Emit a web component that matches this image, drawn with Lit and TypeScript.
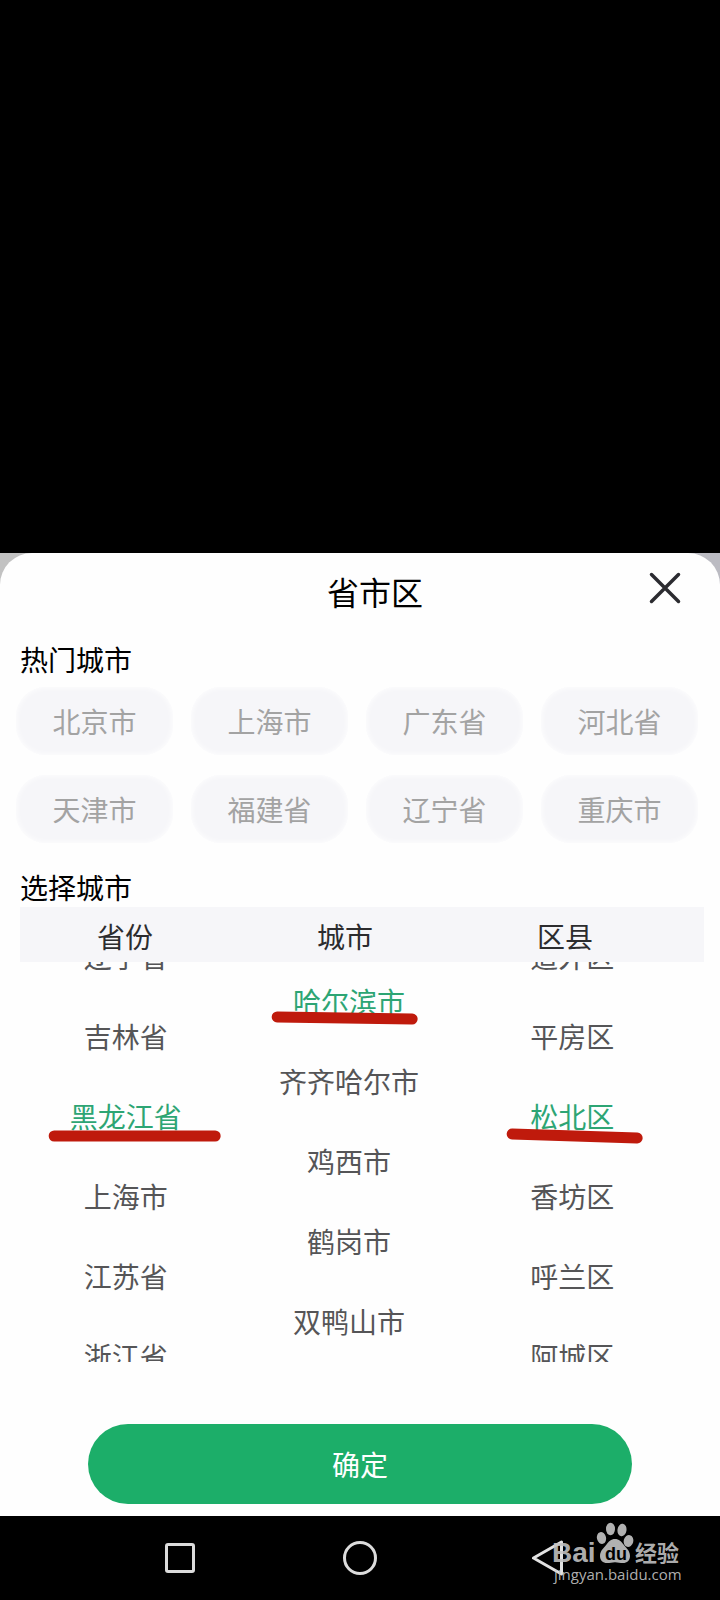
import { LitElement, html, css, svg } from "lit";
import { customElement, state } from "lit/decorators.js";
import { classMap } from "lit/directives/class-map.js";

interface Column {
  title: string;
  items: string[];
  selected: string;
  // end points of the marker stroke inside the 223 x 80 item cell
  stroke: [number, number, number, number];
  scrolled: boolean;
}

const HOT = ["北京市", "上海市", "广东省", "河北省", "天津市", "福建省", "辽宁省", "重庆市"];

const COLUMNS: Column[] = [
  {
    title: "省份",
    items: ["辽宁省", "吉林省", "黑龙江省", "上海市", "江苏省", "浙江省"],
    selected: "黑龙江省",
    stroke: [40, 59, 201, 59],
    scrolled: true,
  },
  {
    title: "城市",
    items: ["哈尔滨市", "齐齐哈尔市", "鸡西市", "鹤岗市", "双鸭山市"],
    selected: "哈尔滨市",
    stroke: [40, 55, 175, 57],
    scrolled: false,
  },
  {
    title: "区县",
    items: ["道外区", "平房区", "松北区", "香坊区", "呼兰区", "阿城区"],
    selected: "松北区",
    stroke: [51, 57, 176, 61],
    scrolled: true,
  },
];

@customElement("app-root")
export class AppRoot extends LitElement {
  static styles = css`
    :host {
      display: flex;
      flex-direction: column;
      min-height: 100vh;
      background: #000;
      color: #000;
      font-family: "Noto Sans CJK SC", sans-serif;
      font-size: 28px;
    }
    button {
      margin: 0;
      padding: 0;
      border: 0;
      background: none;
      color: inherit;
      font: inherit;
      cursor: pointer;
    }
    h1, h2, ul { margin: 0; padding: 0; font-weight: 400; }
    svg { display: block; }
    .scrim { flex: 1; }
    .backdrop { background: linear-gradient(90deg, #c2c2c2, #bbbbc2); }
    .sheet {
      display: flex;
      flex-direction: column;
      background: #fefefe;
      border-radius: 32px 32px 0 0;
    }
    .head {
      display: flex;
      height: 80px;
      padding: 0 25px 0 115px;
    }
    .title {
      flex: 1;
      text-align: center;
      font-size: 32px;
      line-height: 76px;
    }
    .close {
      display: grid;
      place-items: center;
      width: 60px;
      height: 70px;
    }
    .section {
      padding: 0 20px;
      font-size: 28px;
      line-height: 36px;
    }
    .section.hot { margin: 8px 0 10px; }
    .section.pick { margin: 26px 0 2px; }
    .chips {
      display: grid;
      grid-template-columns: repeat(4, 1fr);
      gap: 20px 18px;
      padding: 0 22px 0 16px;
    }
    .chip {
      height: 68px;
      border-radius: 30px;
      background: #f6f6f9;
      color: #a3a3a3;
      box-shadow: inset 0 0 6px #fefefe;
    }
    .labels {
      display: grid;
      grid-template-columns: 21fr 23fr 21fr;
      height: 55px;
      margin: 0 16px 0 20px;
      padding: 0 34px 0 0;
      box-sizing: border-box;
      background: #f6f6f9;
      color: #2c2c2e;
      text-align: center;
      line-height: 58px;
    }
    .picker {
      display: grid;
      grid-template-columns: repeat(3, 1fr);
      height: 400px;
      padding: 0 36px 0 14px;
      overflow: hidden;
    }
    .column { list-style: none; }
    .column.scrolled { margin-top: -45px; }
    .item { position: relative; }
    .option {
      display: block;
      width: 100%;
      height: 80px;
      padding-bottom: 2px;
      color: #555557;
    }
    .option.on { color: #2da574; }
    .stroke {
      position: absolute;
      inset: 0;
      width: 100%;
      height: 80px;
      pointer-events: none;
    }
    .confirm {
      height: 80px;
      margin: 62px 88px 12px;
      border-radius: 40px;
      background: #1cae69;
      color: #fff;
    }
    .nav {
      position: relative;
      display: grid;
      grid-template-columns: repeat(3, 1fr);
      height: 84px;
      padding: 0 90px;
    }
    .key { display: grid; place-items: center; }
    .mark {
      position: absolute;
      right: 36px;
      top: 4px;
    }
    .latin { font-family: "Liberation Sans", sans-serif; font-weight: 700; }
    .cjk { font-weight: 700; }
    .site { font-family: "Open Sans", sans-serif; }
  `;

  @state() private chosen = COLUMNS.map((c) => c.selected);

  private choose(index: number, name: string) {
    this.chosen = this.chosen.map((old, i) => (i === index ? name : old));
  }

  private renderStroke([x1, y1, x2, y2]: Column["stroke"]) {
    return html`<svg class="stroke" viewBox="0 0 223 80" aria-hidden="true">
      ${svg`<line x1=${x1} y1=${y1} x2=${x2} y2=${y2} stroke="#bf1a0c" stroke-width="11" stroke-linecap="round"/>`}
    </svg>`;
  }

  private renderColumn(column: Column, index: number) {
    return html`<ul class=${classMap({ column: true, scrolled: column.scrolled })} aria-label=${column.title}>
      ${column.items.map((name) => {
        const on = this.chosen[index] === name;
        return html`<li class="item">
          <button class=${classMap({ option: true, on })} aria-pressed=${on} @click=${() => this.choose(index, name)}>${name}</button>
          ${column.selected === name ? this.renderStroke(column.stroke) : ""}
        </li>`;
      })}
    </ul>`;
  }

  render() {
    return html`
      <div class="scrim"></div>
      <div class="backdrop">
        <main class="sheet">
          <header class="head">
            <h1 class="title">省市区</h1>
            <button class="close" aria-label="关闭">
              <svg width="32" height="32" viewBox="0 0 32 32" fill="none" stroke="#2b2b30" stroke-width="3.500" stroke-linecap="round">
                <path d="M2.500 2.500 29.500 29.500M29.500 2.500 2.500 29.500" />
              </svg>
            </button>
          </header>
          <h2 class="section hot">热门城市</h2>
          <div class="chips">
            ${HOT.map((name) => html`<button class="chip">${name}</button>`)}
          </div>
          <h2 class="section pick">选择城市</h2>
          <div class="labels">${COLUMNS.map((c) => html`<span>${c.title}</span>`)}</div>
          <div class="picker">${COLUMNS.map((c, i) => this.renderColumn(c, i))}</div>
          <button class="confirm">确定</button>
        </main>
      </div>
      <nav class="nav">
        <button class="key" aria-label="最近任务">
          <svg width="36" height="36" viewBox="0 0 36 36" fill="none" stroke="#dcdcdc" stroke-width="3">
            <rect x="4.500" y="4.500" width="27" height="27" rx="1.500" />
          </svg>
        </button>
        <button class="key" aria-label="主屏幕">
          <svg width="36" height="36" viewBox="0 0 36 36" fill="none" stroke="#dcdcdc" stroke-width="3">
            <circle cx="18" cy="18" r="15.500" />
          </svg>
        </button>
        <button class="key" aria-label="返回">
          <svg width="52" height="36" viewBox="0 0 52 36" fill="none" stroke="#e2e2e2" stroke-width="3" stroke-linejoin="round">
            <path d="M19.500 18 47.500 2V34Z" />
          </svg>
        </button>
        <svg class="mark" width="132" height="68" viewBox="0 0 132 68" fill="#c4c4c4" fill-opacity="0.9">
          <text class="latin" x="0" y="42" font-size="28">Bai</text>
          <ellipse cx="49.500" cy="18" rx="4.600" ry="6" transform="rotate(-14 49.500 18)" />
          <ellipse cx="58.500" cy="9" rx="4.500" ry="6.200" />
          <ellipse cx="70" cy="10" rx="4.500" ry="6.200" transform="rotate(8 70 10)" />
          <ellipse cx="76.500" cy="21" rx="4.800" ry="6" transform="rotate(14 76.500 21)" />
          <path d="M63 19c4 0 6.500 2.500 8.500 5.500 2.500 3.500 6.500 6 6.500 11.500 0 4.500-3 7-7 7-3 0-5-.8-8-.8s-5 .8-8 .8c-4 0-7-2.500-7-7 0-5.500 4-8 6.500-11.500 2-3 4.500-5.500 8.500-5.500Z" />
          <text class="latin" x="53" y="40" font-size="18" fill="#000" fill-opacity="1">du</text>
          <text class="cjk" x="83" y="41" font-size="22">经验</text>
          <text class="site" x="2" y="60" font-size="15">jingyan.baidu.com</text>
        </svg>
      </nav>
    `;
  }
}
